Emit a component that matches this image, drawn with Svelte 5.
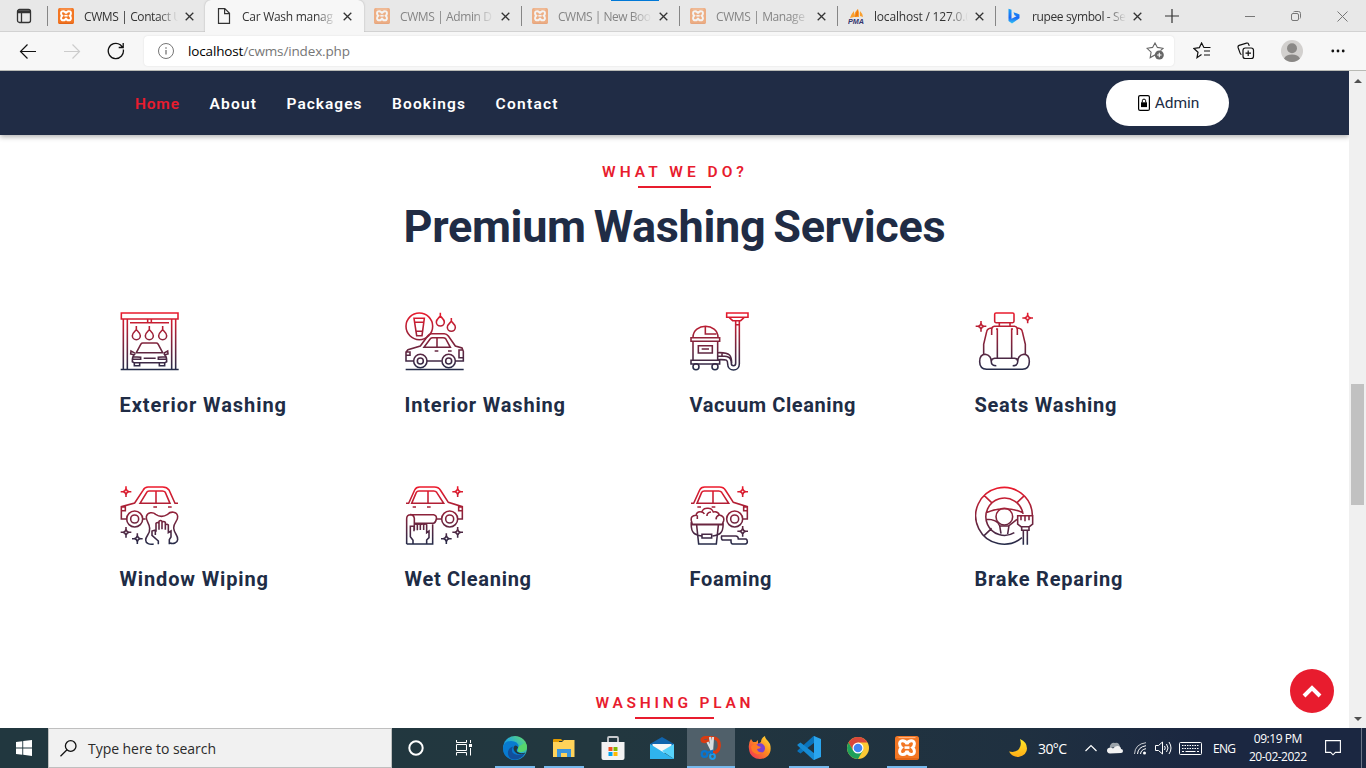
<script>
  const tabs = [
    { title: 'CWMS | Contact U', icon: 'xampp', w: 98 },
    { title: 'Car Wash manag', icon: 'page', w: 91, active: true },
    { title: 'CWMS | Admin D', icon: 'xampp', w: 92, faded: true },
    { title: 'CWMS | New Boo', icon: 'xampp', w: 93, faded: true },
    { title: 'CWMS | Manage', icon: 'xampp', w: 89, faded: true },
    { title: 'localhost / 127.0.0', icon: 'pma', w: 98 },
    { title: 'rupee symbol - Se', icon: 'bing', w: 94 }
  ];
  const links = [
    { label: 'Home', w: 44, active: true },
    { label: 'About', w: 46.5 },
    { label: 'Packages', w: 75 },
    { label: 'Bookings', w: 73 },
    { label: 'Contact', w: 62 }
  ];
  const services = [
    { name: 'Exterior Washing', icon: 'exterior', box: '60 36 180 180', w: 166.5 },
    { name: 'Interior Washing', icon: 'interior', box: '45 36 180 180', w: 160.5 },
    { name: 'Vacuum Cleaning', icon: 'vacuum', box: '45 36 180 180', w: 166 },
    { name: 'Seats Washing', icon: 'seat', box: '45 36 180 180', w: 142 },
    { name: 'Window Wiping', icon: 'window', box: '60 33 180 180', w: 148.5 },
    { name: 'Wet Cleaning', icon: 'wet', box: '915 33 180 180', w: 126.5 },
    { name: 'Foaming', icon: 'foam', box: '45 33 180 180', w: 82 },
    { name: 'Brake Reparing', icon: 'brake', box: '900 33 180 180', w: 148 }
  ];
  const apps = ['cortana', 'taskview', 'edge', 'folder', 'store', 'mail', 'snip', 'firefox', 'code', 'chrome', 'xampp'];
  const running = ['edge', 'folder', 'code', 'xampp', 'snip'];

  // Tracks the letters out (or in) so the label takes the given width.
  function fit(node, width) {
    const natural = node.getBoundingClientRect().width;
    const s = (width - natural) / (node.textContent.length - 1);
    node.style.letterSpacing = s + 'px';
    node.style.marginRight = -s + 'px';
  }
</script>

{#snippet xampp(size)}
  <svg width={size} height={size} viewBox="0 0 24 24">
    <rect width="24" height="24" rx="2.5" fill="#f37623" />
    <path d="M1 23h22" stroke="#d5560d" stroke-width="1" />
    <path d="M3.500 1.600h17" stroke="#ffb98a" stroke-width="1" />
    <path d="M12 8.300C11 3.700 4.600 3.500 4.600 7.700c0 1.800.6 2.900 1.800 3.900-1.200 1-1.800 2.100-1.800 3.900 0 4.200 6.400 4 7.400-.6 1 4.600 7.400 4.800 7.400.6 0-1.800-.6-2.900-1.800-3.900 1.200-1 1.800-2.100 1.800-3.900 0-4.200-6.400-4-7.400.6z" fill="none" stroke="#fff" stroke-width="3" />
    <path d="M9.500 11.600h5" stroke="#fff" stroke-width="2.600" />
  </svg>
{/snippet}

{#snippet sparkle(x, y)}
  <path d="M{x} {y - 16}v7M{x} {y + 9}v7M{x - 16} {y}h7M{x + 9} {y}h7M{x} {y - 9}l3 6 6 3-6 3-3 6-3-6-6-3 6-3z" />
{/snippet}

<svg class="defs" width="0" height="0">
  <defs>
    <linearGradient id="ink" gradientUnits="userSpaceOnUse" x1="0" y1="34" x2="0" y2="212">
      <stop offset="0" stop-color="#ee1a2c" /><stop offset="1" stop-color="#202c4a" />
    </linearGradient>
    <linearGradient id="edgeA" x1="0" y1="1" x2="1" y2="0"><stop offset="0" stop-color="#0c5cb0" /><stop offset=".5" stop-color="#22a9dc" /><stop offset="1" stop-color="#6be35c" /></linearGradient>
    <linearGradient id="bingA" x1="0" y1="0" x2="0" y2="1"><stop offset="0" stop-color="#1aa5f4" /><stop offset=".6" stop-color="#1966f5" /><stop offset="1" stop-color="#33c8f4" /></linearGradient>
    <linearGradient id="foxA" x1="1" y1="0" x2="0" y2="1"><stop offset="0" stop-color="#ffe83a" /><stop offset=".45" stop-color="#ff8a20" /><stop offset="1" stop-color="#f0265c" /></linearGradient>
    <linearGradient id="moonA" x1="0" y1="0" x2="0" y2="1"><stop offset="0" stop-color="#ffe928" /><stop offset="1" stop-color="#ffad17" /></linearGradient>
  </defs>
</svg>

<div class="screen">
  <div class="loading"></div>
  <div class="tabbar">
    <div class="tabmenu">
      <svg width="16" height="16" viewBox="0 0 16 16" fill="none" stroke="#333" stroke-width="1.300"><rect x="1.500" y="1.500" width="13" height="13" rx="2" /><path d="M1.500 3h13M1.500 4.500h13M5.500 5v9" /></svg>
    </div>
    {#each tabs as t}
      <div class="tab" class:active={t.active} class:faded={t.faded}>
        <span class="fav">
          {#if t.icon === 'xampp'}{@render xampp(16)}
          {:else if t.icon === 'page'}
            <svg width="16" height="16" viewBox="0 0 16 16" fill="none" stroke="#333" stroke-width="1.200"><path d="M2.500.6h6.300l4.700 4.700v10.100h-11zM8.600.8v4.800h4.700" /></svg>
          {:else if t.icon === 'pma'}
            <svg width="16" height="16" viewBox="0 0 16 16"><path d="M2 10q1-4 4-7v6zM6 9q0-5 4-8 2 4 1 8zM12 8V3q3 3 3 6z" fill="#f9a030" /><path d="M7 9q1-5 3-8v7z" fill="#f07a10" /><text x="0" y="15.500" textLength="16" lengthAdjust="spacingAndGlyphs" class="pma">PMA</text></svg>
          {:else}
            <svg width="16" height="16" viewBox="0 0 16 16"><path d="M2.500.8l3 1v9l5-2.600-2-1-1-3 6 2.200v3.800L6 15.500 2.500 13z" fill="url(#bingA)" /></svg>
          {/if}
        </span>
        <span class="title"><span use:fit={t.w}>{t.title}</span></span>
        <svg class="x" width="9" height="9" viewBox="0 0 9 9"><path d="M.7.700l7.600 7.600M8.300.7L.7 8.300" stroke="#333" stroke-width="1.300" /></svg>
      </div>
    {/each}
    <div class="newtab"><svg width="14" height="14" viewBox="0 0 14 14"><path d="M7 0v14M0 7h14" stroke="#333" stroke-width="1.200" /></svg></div>
    <div class="winbtns">
      <svg width="10" height="10" viewBox="0 0 10 10"><path d="M0 5.500h10" stroke="#777" /></svg>
      <svg width="10" height="10" viewBox="0 0 10 10" fill="none" stroke="#777"><rect x=".5" y="2.500" width="7" height="7" rx="1.500" /><path d="M2.500 1q.3-.5 1-.5h4q2 0 2 2v4q0 .7-.5 1" /></svg>
      <svg width="11" height="11" viewBox="0 0 11 11"><path d="M.5.5l10 10M10.500.5l-10 10" stroke="#777" /></svg>
    </div>
  </div>

  <div class="toolbar">
    <svg class="back" width="18" height="16" viewBox="0 0 18 16" fill="none" stroke="#111" stroke-width="1.200"><path d="M17 8.500H1.500M8.500 1.500l-7 7 7 7" /></svg>
    <svg class="fwd" width="18" height="16" viewBox="0 0 18 16" fill="none" stroke="#ccc" stroke-width="1.200"><path d="M1 8.500h15.500M9.500 1.500l7 7-7 7" /></svg>
    <svg class="reload" width="18" height="18" viewBox="0 0 18 18" fill="none" stroke="#111" stroke-width="1.300"><path d="M16.300 7.500A7.600 7.600 0 1 1 13.300 2.800l2.400 2.400M16.200 1v4.500h-4.500" /></svg>
    <div class="address">
      <svg width="16" height="16" viewBox="0 0 16 16" fill="none" stroke="#767676"><circle cx="8" cy="8" r="7.500" /><path d="M8 7v4.500M8 4.300v1.400" stroke-width="1.300" /></svg>
      <span class="url"><span use:fit={162}><b>localhost</b>/cwms/index.php</span></span>
      <svg class="addfav" width="18" height="18" viewBox="0 0 18 18" fill="none" stroke="#666" stroke-width="1.100"><path d="M10 13.500l-1-.6-4.800 2.700.9-5.500L1 6.300l5.600-.9L9 1l2.400 4.400 5.600.9-2.500 2.300" /><circle cx="13.300" cy="13" r="4.500" fill="#666" stroke="none" /><path d="M13.300 10.800v4.400M11.100 13h4.400" stroke="#fff" /></svg>
    </div>
    <svg class="favs" width="18" height="18" viewBox="0 0 18 18" fill="none" stroke="#111" stroke-width="1.200"><path d="M8.500 12.500L4 15.700l1-5.500L1 6.500l5.300-.8L8.600 1l2.300 4.500h6.600M11 9h6M11 13h6" /></svg>
    <svg class="coll" width="18" height="18" viewBox="0 0 18 18" fill="none" stroke="#111" stroke-width="1.200"><rect x="6" y="6" width="10.500" height="10.500" rx="2.300" /><path d="M11.200 8.500v5.500M8.500 11.200H14M4.500 12.500q-1-.3-1.400-1.400L1.100 5.500q-.4-1.500 1-2.100L9.500 1.100q1.500-.4 2 .8l.8 2" /></svg>
    <svg class="user" width="22" height="22" viewBox="0 0 22 22"><circle cx="11" cy="11" r="11" fill="#d2d0ce" /><circle cx="11" cy="8.300" r="5" fill="#8a8886" /><path d="M3 18.500q2-4 8-4t8 4a11 11 0 0 1-16 0z" fill="#8a8886" /></svg>
    <svg class="more" width="14" height="4" viewBox="0 0 14 4" fill="#111"><circle cx="1.800" cy="2" r="1.400" /><circle cx="7" cy="2" r="1.400" /><circle cx="12.200" cy="2" r="1.400" /></svg>
  </div>

  <div class="viewport">
    <main>
      <nav>
        <div class="links">
          {#each links as l}<a class:on={l.active}><span use:fit={l.w}>{l.label}</span></a>{/each}
        </div>
        <div class="admin">
          <svg width="12" height="16" viewBox="0 0 12 16"><rect x=".6" y=".6" width="10.800" height="14.800" rx="1.500" fill="none" stroke="#000" stroke-width="1.200" /><path d="M3 7.300h6v4.800H3z" /><path d="M4.300 7.500V5.800a1.700 1.700 0 0 1 3.400 0v1.700" fill="none" stroke="#000" /></svg>
          <span use:fit={44.5}>Admin</span>
        </div>
      </nav>

      <section class="head">
        <p class="eyebrow"><span use:fit={142}>WHAT WE DO?</span></p>
        <i class="rule"></i>
        <h2><span use:fit={542}>Premium Washing Services</span></h2>
      </section>

      <div class="grid">
        {#each services as s}
          <article>
            <svg width="60" height="60" viewBox={s.box} fill="none" stroke="url(#ink)" stroke-width="4.700">
              {#if s.icon === 'exterior'}
                <path d="M64 39h170v18H64zM70 58v149M82 58v149M215 58v149M227 58v149M62 208.500h174M90 68h117M143 58v9M154 58v9" />
                {#each [109, 148, 188] as x}<path d="M{x} 78v11c-4 5-12 10-12 18a12 12 0 0 0 24 0c0-8-8-13-12-18" />{/each}
                <path d="M109 158l14-26q2-3 5-3h41q3 0 5 3l14 26M107 158h82M106 160l-13-7-1 9 12 3M190 160l13-7 1 9-12 3M106 160q-10 9-9 25l5 3h93l5-3q1-16-9-25M98 170l24 2v6H98M199 170l-24 2v6h24M131 175h36M103 189v8h16v-8M178 189v8h16v-8" />
              {:else if s.icon === 'interior'}
                <circle cx="88" cy="79" r="40" /><path d="M72 55h31l-7 52H80zM74 67h27M79 94h18" />
                <path d="M151 38v10c-4 5-12 10-12 18a12 12 0 0 0 24 0c0-8-8-13-12-18M184 54v10c-4 5-12 10-12 18a12 12 0 0 0 24 0c0-8-8-13-12-18" />
                <path d="M72 183H48v-27l6-7 37-11 22-30q4-7 12-7h38q7 0 12 7l21 30 20 6 4 10v29h-24M111 183h44M102 142l19-26q3-3 7-3h31q5 0 8 3l14 26zM141 114v27M134 153h11M174 153h11M48 156h12v10H48M219 150h-12v23h12M47 208.500h174" />
                <circle cx="91" cy="183" r="20" /><circle cx="91" cy="183" r="9" /><circle cx="176" cy="183" r="20" /><circle cx="176" cy="183" r="9" />
              {:else if s.icon === 'vacuum'}
                <path d="M48 113h86v11H48zM54 112c0-44 75-44 75 0M91 79v23h33M54 124v56M128 124v56M70 137h42v22H70zM80 147h22M48 181h86v11H48zM155 39h64v13h-64zM163 53l10 9h24l10-9M182 63v127c0 10-13 10-13 0 0-22-13-22-39-22M193 63v129c0 24-35 24-35 0 0-15-4-13-30-13M141 158v13M182 74h11M130 158c36-1 40 9 40 32" />
                <circle cx="63" cy="200" r="9" /><circle cx="120" cy="200" r="9" />
              {:else if s.icon === 'seat'}
                <path d="M108 39h50q4 0 4 4v21q0 4-4 4h-50q-4 0-4-4V43q0-4 4-4M118 69v9M150 69v9M95 105v-16q0-9 8-10h61q8 1 8 10v16M94 84q-12 1-14 11l-9 38v32M173 84q12 1 14 11l9 38v32M108 87h4v87M159 87h-4v87M94 184q0-8 10-9h60q9 1 9 9M77 208h110q21-2 21-23 0-22-17-22-18 3-18 23 0 11-15 11M80 208q-21-2-21-23 0-22 17-22 18 3 18 23 0 11 15 11" />
                {@render sparkle(63, 79)}{@render sparkle(203, 54)}
              {:else if s.icon === 'brake'}
                <path d="M1041 188a85 85 0 1 1 31-68M1018 173a56 56 0 1 1 26-56M928 62l22 21M1048 62l-22 21M928 181l22-21M933 113q57-24 111 0M934 133q33 0 40 19l4 24M998 177l4-25 24-19M975 153h27" />
                <circle cx="988" cy="125" r="25" /><path d="M1028 122h45v25l-10 8h-25l-10-8zM1038 122v14M1050 122v17M1062 122v14M1040 156v10h22v-10M1045 166v43M1057 166v43" />
              {:else}
                {#if s.icon === 'window'}
                  <path d="M82 132H64V95l40-11 25-38q5-10 15-10h44q13 0 19 9l18 40h9M120 85l21-34q1-3 6-3h40q6 0 9 4l14 33zM168 48v37M160 96h11M204 96h11M64 96h12v11H64M127 132h10" />
                  <circle cx="104" cy="132" r="24" /><circle cx="104" cy="132" r="12" />
                  <path d="M161 207c-12 3-24-2-24-12 0-13 14-18 12-35-1-17-12-22-10-35 3-15 21-14 28-7q17 12 36 0c9-10 28-9 30 6 2 14-13 19-12 35 1 17 14 22 12 35-1 10-13 14-23 10M175 208v-10l-19-17v-13l10-3v15M168 170v-25q5-5 9 0v19M177 162v-23q5-5 9 0v24M186 163v-21q5-5 10 0v22M196 164v-14q5-5 9 0v23l8-5v18l-5 8v14" />
                  {@render sparkle(78, 50)}{@render sparkle(78, 172)}{@render sparkle(112, 191)}
                {:else if s.icon === 'wet'}
                  <path d="M918 85h8l18-40q4-9 15-9h44q13 0 18 9l24 37 42 13v37h-13M935 85l14-33q2-4 8-4h44q6 0 9 4l21 33zM984 48v37M938 96h10M981 96h11M1087 96h-11v11h11M1010 132h15" />
                  <circle cx="1049" cy="132" r="24" /><circle cx="1049" cy="132" r="12" />
                  <path d="M920 207v-76q0-12 12-12h69q10 2 8 13t-8 13h-58v-15q-2-12-14-11M920 207h78v-59M943 147v18M943 149q5-4 9 0v17M952 149q6-4 9 0v16M962 149q5-4 9 0v16M971 149q6-4 9 0v24l7-5v20l-7 7v12M939 206v-10l-8-11v-31h11v15" />
                  {@render sparkle(1073, 50)}{@render sparkle(1073, 172)}{@render sparkle(1039, 191)}
                {:else}
                  <path d="M48 85h8l18-40q4-9 15-9h44q13 0 18 9l24 37 42 13v37h-13M66 85l14-33q2-4 8-4h43q6 0 9 4l21 33zM114 48v37M67 96h11M110 96h11M218 96h-12v11h12" />
                  <circle cx="179" cy="132" r="24" /><circle cx="179" cy="132" r="12" />
                  <path d="M49 137q-3-15 14-16 3-13 17-10 5-12 18-11 12-1 17 11 14-3 18 9 16 3 13 17l-4 11H52zM80 111q5 0 8 6M96 123q-1-10 12-12M67 121v11M132 121q-8 1-9 12M50 149h95M65 151l6 56h53l6-56M49 141c-3 36 13 39 31 42M144 141c3 36-13 39-31 42M81 178h29v11H81zM146 183h36q8 0 8 9h23q4 2 4 8t-6 7h-38q-5 0-5-8v-4h-26q-4-3-2-12z" />
                  {@render sparkle(203, 50)}{@render sparkle(203, 169)}
                {/if}
              {/if}
            </svg>
            <h3><span use:fit={s.w}>{s.name}</span></h3>
          </article>
        {/each}
      </div>

      <section class="plan">
        <p class="eyebrow"><span use:fit={155}>WASHING PLAN</span></p>
        <i class="rule wide"></i>
      </section>

      <div class="totop"><svg width="20" height="13" viewBox="0 0 20 13"><path d="M2 11l8-8 8 8" fill="none" stroke="#fff" stroke-width="4" /></svg></div>
    </main>
    <div class="scroll"><i class="up"></i><b></b><i class="down"></i></div>
  </div>

  <div class="taskbar">
    <div class="start"><svg width="16" height="16" viewBox="0 0 16 16" fill="#fff"><path d="M0 2l6.300-.8v6.300H0zM7.200 1L16 0v7.500H7.200zM0 8.400h6.300v6.300L0 14zM7.200 8.400H16V16l-8.800-1.200z" /></svg></div>
    <div class="search">
      <svg width="17" height="17" viewBox="0 0 17 17" fill="none" stroke="#111" stroke-width="1.300"><circle cx="10.700" cy="6" r="5.300" /><path d="M7 9.800L.5 16.300" /></svg>
      <span use:fit={128}>Type here to search</span>
    </div>
    <div class="apps">
      {#each apps as a}
        <div class="app {a}" class:running={running.includes(a)}>
          {#if a === 'xampp'}{@render xampp(24)}
          {:else}
            <svg width="24" height="24" viewBox="0 0 24 24">
              {#if a === 'cortana'}<circle cx="12" cy="12" r="6.700" fill="none" stroke="#fff" stroke-width="2" />
              {:else if a === 'taskview'}<path d="M4.500 4v2.500h10V4M4.500 19.500v-3h10v3M4.500 8.500h10v6h-10zM18.500 4v3M18.500 12v7.500" fill="none" stroke="#fff" /><path d="M17 8h3v3h-3z" fill="#fff" />
              {:else if a === 'edge'}<circle cx="12" cy="12" r="12" fill="url(#edgeA)" /><path d="M0 12q1-7 8-7 7 0 8 6 0 2-2 3c0 3 4 4 8 3-4 7-11 8-15 6Q0 20 0 12z" fill="#087bd0" /><path d="M7.500 22.500c-5-5-2-11 2.500-12-3 5 0 11 12 7-4 6-9 7-14.500 5z" fill="#124f9b" /><path d="M12 9.500q3 0 3 2.500-2 1-1 3.500 3 3 8.500 1l-.5 1q-7 2-10-1.500-3-4 0-6.500z" fill="#22373f" /><path d="M14.500 15.500q5 2 9-2 1-4-1-7l-7 4z" fill="#56d66c" />
              {:else if a === 'folder'}<path d="M1 4q0-1 1-1h7l2 2h-4v3H1z" fill="#e29b00" /><path d="M1 6h9l2-2h10.500v17H1z" fill="#ffd35a" /><path d="M5 21v-8h14v8h-4v-4H9v4z" fill="#3b95dd" />
              {:else if a === 'store'}<path d="M7 7V2q0-1 1-1h8q1 0 1 1v5" fill="none" stroke="#c8cace" stroke-width="1.800" /><path d="M.5 6h23v16q0 2-2 2h-19q-2 0-2-2z" fill="#f3f3f3" /><path d="M7.500 11h4v4h-4z" fill="#f25022" /><path d="M12.500 11h4v4h-4z" fill="#7fba00" /><path d="M7.500 16h4v4h-4z" fill="#00a4ef" /><path d="M12.500 16h4v4h-4z" fill="#ffb900" />
              {:else if a === 'mail'}<path d="M0 8l12-7 12 7v5H0z" fill="#1064ad" /><path d="M2.500 8h19v5L12 18l-9.500-5z" fill="#f7f7f7" /><path d="M0 8l12 7.500L24 23H0z" fill="#2fb3ed" /><path d="M24 8v15L12 15z" fill="#57d2fa" />
              {:else if a === 'snip'}<path d="M13 1.500C7 .5 1.500 2 3.500 5q3 1.500 7-1M12 2c7-1 8.500 4 8.300 8s-3.300 8-7.300 6" fill="none" stroke="#d83b12" stroke-width="3.200" /><path d="M11 1l2 14 1-14M8.500 6l4.500 9" stroke="#d8dde0" stroke-width="2.200" fill="none" /><circle cx="5.500" cy="18" r="2.800" fill="none" stroke="#0875cf" stroke-width="2.200" /><circle cx="13.500" cy="20.500" r="2.400" fill="none" stroke="#1b9aeb" stroke-width="2" /><path d="M8 17l5-2v3" stroke="#0875cf" stroke-width="2" fill="none" />
              {:else if a === 'firefox'}<path d="M1 13Q0 7 3 3l2 3h3l2-2v4l3-2c0-3 2-5 4-6 0 3 3 4 5 8 5 18-20 20-21 5z" fill="url(#foxA)" /><circle cx="12" cy="12.300" r="5" fill="#7b3fd1" /><path d="M3 11c2-3 5-3 7-1l3 1q-1 2-4 2 1 4 6 3-6 5-11-1z" fill="#ff7a25" />
              {:else if a === 'code'}<path d="M17.500 0v6.500L3.500 17.500.500 15.500v-1L16.500 0z" fill="#0a73bb" /><path d="M.5 8.500l3-2L17.500 17.500V24h-1L.5 9.500z" fill="#168bd4" /><path d="M17 0l7 3v18l-7 3z" fill="#2aa5ee" />
              {:else}<circle cx="12" cy="12" r="11" fill="#fcc934" /><path d="M2.500 6.500A11 11 0 0 1 21.500 6.500H12L7.200 14.800z" fill="#d9473b" /><path d="M2.500 6.500A11 11 0 0 0 12 23l4.800-8.300H7.200z" fill="#1ea05a" /><circle cx="12" cy="12" r="5.500" fill="#fff" /><circle cx="12" cy="12" r="4.300" fill="#4285f4" />
              {/if}
            </svg>
          {/if}
        </div>
      {/each}
    </div>
    <div class="tray">
      <svg width="18" height="18" viewBox="0 0 18 18"><path d="M11 0q7 3 7 9.500T9.500 18Q3 18 0 12.500 7 14 10 10q3-4 1-10z" fill="url(#moonA)" /></svg>
      <span class="temp"><span use:fit={29}>30°C</span></span>
      <svg class="chev" width="12" height="8" viewBox="0 0 12 8" fill="none" stroke="#fff" stroke-width="1.200"><path d="M.5 7L6 1.500 11.500 7" /></svg>
      <svg class="cloud" width="16" height="12" viewBox="0 0 16 12"><path d="M3 6a4 4 0 0 1 5-5q4-1 5 4H8z" fill="#9ba3aa" /><path d="M3 11.500Q0 11 0 8.500t3-3q2 0 3 1 2-3 5-2.500t3 3q2 0 2 2t-2 2z" fill="#f2f2f2" /></svg>
      <svg class="wifi" width="13" height="13" viewBox="0 0 13 13" fill="none" stroke="#fff"><path d="M.5 12Q1 2 12 .700" opacity=".75" /><path d="M3.500 12Q4 5 12 3.700M6.500 12q.5-4.500 5.500-5.300" /><circle cx="10.500" cy="11" r="1.500" fill="#fff" stroke="none" /></svg>
      <svg class="vol" width="17" height="14" viewBox="0 0 17 14" fill="none" stroke="#fff"><path d="M.5 4.500h3l4-3.500v12l-4-3.500h-3zM9.500 5q1.500 2 0 4M11.500 3q3 4 0 8M14 1q4 6 0 12" /></svg>
      <svg class="kbd" width="23" height="13" viewBox="0 0 23 13" fill="none" stroke="#fff"><rect x=".5" y=".5" width="22" height="12" rx="1" /><path d="M3 3.500h17M3 6.500h17" stroke-dasharray="1.500 1" /><path d="M3 9.500h2M6.500 9.500h10M18 9.500h2" /></svg>
      <span class="eng"><span use:fit={23}>ENG</span></span>
      <div class="clock"><div><span use:fit={48.5}>09:19 PM</span></div><div><span use:fit={58}>20-02-2022</span></div></div>
      <svg class="note" width="16" height="16" viewBox="0 0 16 16" fill="none" stroke="#fff" stroke-width="1.100"><path d="M.6.600h14.800v11.800h-5l-2.400 2.400-2.400-2.400h-5z" /></svg>
      <i class="edgeline"></i>
    </div>
  </div>
</div>

<style>
  :global(body) { margin: 0; overflow: hidden; }
  .defs { position: absolute; }
  .screen { width: 1366px; height: 768px; display: flex; flex-direction: column; overflow: hidden; position: relative; background: #fff; font-family: "Open Sans", "Noto Sans", sans-serif; }
  svg { display: block; flex: none; }
  span { white-space: nowrap; }
  [class] > span, h2 span, h3 span, a span, .clock span { display: inline-block; }
  .loading { position: absolute; z-index: 3; left: 611px; top: 0; width: 48px; height: 1px; background: #0078d7; }

  .tabbar { height: 32px; flex: none; box-sizing: border-box; display: flex; background: #e8e8e8; border-bottom: 1px solid #d2d2d2; }
  .tabmenu { width: 47px; display: flex; align-items: center; justify-content: center; }
  .tab { width: 158px; box-sizing: border-box; display: flex; align-items: center; padding-left: 10px; font-size: 12px; color: #333; border-left: 1px solid transparent; background: linear-gradient(#868686, #868686) no-repeat -1px 6px / 1px 20px; background-origin: padding-box; background-clip: border-box; padding-top: 1px; }
  .tab.active { background: #f7f7f7; border-radius: 6px 6px 0 0; height: 32px; box-shadow: 0 0 2px #aaa; z-index: 1; clip-path: inset(-2px -3px 0 -3px); padding-top: 0; width: 159px; margin-right: -1px; }
  .active + .tab { background-image: none; }
  .fav { width: 16px; height: 16px; }
  .faded .fav { opacity: .5; }
  .faded .title { color: #858585; }
  .title { width: 98px; margin: 0 -4px 0 10px; overflow: hidden; -webkit-mask-image: linear-gradient(90deg, #000 74px, transparent 94px); mask-image: linear-gradient(90deg, #000 74px, transparent 94px); }
  .x { margin-left: 7px; }
  .newtab { display: flex; align-items: center; padding: 1px 0 0 12px; }
  .winbtns { margin-left: auto; display: flex; align-items: center; gap: 36px; padding: 1px 18px 0 0; }
  .pma { font: italic bold 6.500px "Liberation Sans", sans-serif; fill: #34346e; }

  .toolbar { height: 39px; flex: none; box-sizing: border-box; display: flex; align-items: center; background: #f7f7f7; border-bottom: 1px solid #b9bab5; padding: 0 21px 0 19px; }
  .fwd { margin-left: 26px; }
  .reload { margin-left: 26px; }
  .address { width: 1030px; height: 30px; margin-left: 19px; background: #fff; border-radius: 4px; box-shadow: 0 0 2px #ddd; box-sizing: border-box; padding: 0 10px 0 14px; display: flex; align-items: center; }
  .url { margin-left: 14px; font-size: 13.500px; color: #767676; }
  .url b { font-weight: 400; color: #000; }
  .addfav { margin-left: auto; }
  .favs { margin-left: 19px; }
  .coll { margin-left: 26px; }
  .user { margin-left: 26px; }
  .more { margin-left: 28px; }

  .viewport { height: 657px; flex: none; display: flex; overflow: hidden; }
  main { width: 1349px; height: 657px; position: relative; overflow: hidden; font-family: Roboto, "Liberation Sans", sans-serif; color: #202c45; }
  nav { height: 64px; box-sizing: border-box; background: #202c45; box-shadow: 0 2px 5px rgba(0,0,0,.3); display: flex; align-items: center; justify-content: space-between; padding: 0 120px 0 135px; }
  .links { display: flex; gap: 30.500px; font-size: 15.500px; font-weight: 600; color: #fff; padding-top: 1px; }
  .links .on { color: #e81c2e; }
  .admin { width: 123px; height: 46px; border-radius: 23px; background: #fff; display: flex; align-items: center; justify-content: center; gap: 5px; font-size: 15.500px; color: #202c45; box-sizing: border-box; padding-left: 2px; }
  .head, .plan { display: flex; flex-direction: column; align-items: center; }
  .head { padding-top: 27px; }
  .eyebrow { margin: 0 3px 0 0; font-size: 15.500px; line-height: 20px; font-weight: 600; color: #e81c2e; }
  .rule { width: 73px; height: 2px; margin-top: 4px; background: #e81c2e; }
  .wide { width: 79px; }
  h2 { margin: 9px 0 0; font-size: 45px; line-height: 60px; font-weight: 700; word-spacing: -3px; }
  .grid { width: 1140px; margin: 55px 0 0 119.500px; display: grid; grid-template-columns: repeat(4, 285px); grid-auto-rows: 174px; }
  h3 { margin: 20px 0 0; font-size: 20px; line-height: 26px; font-weight: 700; }
  .plan { padding-top: 33px; }
  .totop { position: absolute; left: 1290px; top: 598px; width: 44px; height: 44px; border-radius: 50%; background: #e81c2e; display: flex; align-items: center; justify-content: center; }
  .scroll { width: 17px; background: #f0f0f0; display: flex; flex-direction: column; align-items: center; }
  .scroll b { width: 13px; height: 121px; margin-top: 301px; background: #c1c1c1; }
  .up { border: 4px solid transparent; border-top: 0; border-bottom: 4px solid #505050; margin-top: 8px; }
  .down { border: 4px solid transparent; border-bottom: 0; border-top: 4px solid #505050; margin-top: auto; margin-bottom: 7px; }

  .taskbar { height: 40px; flex: none; display: flex; background: linear-gradient(90deg, #21373f 0%, #22373f 45%, #1f3040 75%, #1b2741 88%, #1b2741 100%); color: #fff; }
  .start { width: 48px; display: flex; align-items: center; justify-content: center; }
  .search { width: 344px; box-sizing: border-box; border: 1px solid #bfbfbf; background: #f1f1f1; display: flex; align-items: center; padding-left: 11px; gap: 11px; font-size: 14px; color: #2b2b2b; }
  .apps { display: flex; gap: 1px; }
  .app { width: 48px; box-sizing: border-box; display: flex; align-items: center; justify-content: center; position: relative; }
  .cortana { margin-right: -1px; }
  .edge { margin-left: 2px; }
  .snip { background: #50606a; }
  .running::after { content: ""; position: absolute; left: 4px; right: 4px; bottom: 0; height: 2px; background: #76b9ed; }
  .snip::after { left: 0; right: 0; }
  .tray { margin-left: auto; width: 357px; display: flex; align-items: center; font-size: 12px; }
  .temp { margin-left: 11px; font-size: 14px; width: 29px; }
  .chev { margin-left: 18px; }
  .cloud { margin-left: 10px; }
  .wifi { margin-left: 11px; }
  .vol { margin-left: 8px; }
  .kbd { margin-left: 7px; }
  .eng { margin-left: 11px; width: 23px; }
  .clock { margin-left: 13px; width: 58px; text-align: center; line-height: 18px; }
  .note { margin-left: 18px; }
  .edgeline { width: 1px; height: 40px; margin-left: 20px; background: #6d7587; }
</style>
